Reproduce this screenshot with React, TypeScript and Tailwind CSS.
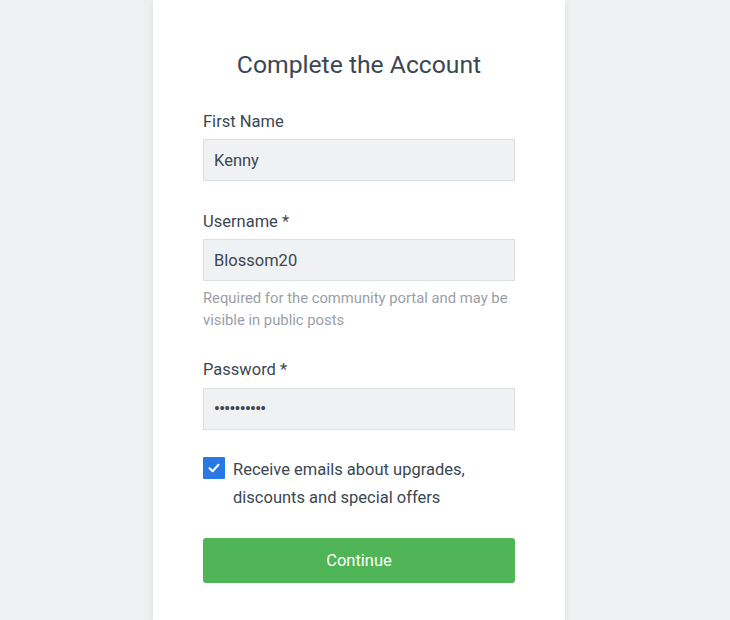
import React from "react";

export default function App() {
  return (
    <div className="min-h-[620px] w-full bg-[#eff0f1]" style={{ fontFamily: "Roboto, 'Liberation Sans', sans-serif" }}>
      <div className="w-[412px] ml-[153px] min-h-[620px] bg-white shadow-[0_0_6px_rgba(0,0,0,0.08)] px-[50px] pt-[48px] pb-[40px]">
        <h1 className="pt-[2px] text-center text-[24.7px] leading-[30px] text-[#3b4752]">Complete the Account</h1>

        <div className="mt-[29px]">
          <label className="block pt-[2px] text-[16.5px] leading-[22px] text-[#3b4752]">First Name</label>
          <div className="mt-[6px] h-[42px] pt-[2px] bg-[#f0f1f3] border border-[#dcdfe3] flex items-center px-[10px] text-[16.5px] text-[#3b4752]">Kenny</div>
        </div>

        <div className="mt-[28px]">
          <label className="block pt-[2px] text-[16.5px] leading-[22px] text-[#3b4752]">Username *</label>
          <div className="mt-[6px] h-[42px] pt-[2px] bg-[#f0f1f3] border border-[#dcdfe3] flex items-center px-[10px] text-[16.5px] text-[#3b4752]">Blossom20</div>
          <p className="mt-[6px] text-[14.8px] leading-[22px] text-[#9aa0a6]">Required for the community portal and may be visible in public posts</p>
        </div>

        <div className="mt-[26px]">
          <label className="block pt-[2px] text-[16.5px] leading-[22px] text-[#3b4752]">Password *</label>
          <div className="mt-[7px] h-[42px] bg-[#f0f1f3] border border-[#dcdfe3] flex items-center px-[10px] text-[16px] tracking-[-0.6px] font-bold text-[#3b4752]">••••••••••</div>
        </div>

        <div className="mt-[25px] flex items-start gap-[8px]">
          <div className="mt-[2px] w-[22px] h-[22px] shrink-0 bg-[#2a78e4] rounded-[1px] flex items-center justify-center">
            <svg width="14" height="14" viewBox="0 0 14 14" fill="none">
              <path d="M2.5 7.2 L5.6 10.2 L11.5 3.8" stroke="white" strokeWidth="2" strokeLinecap="round" strokeLinejoin="round" />
            </svg>
          </div>
          <p className="pt-[1px] text-[16.5px] leading-[28px] text-[#3b4752]">Receive emails about upgrades, discounts and special offers</p>
        </div>

        <button className="mt-[26px] w-full h-[45px] pt-[2px] bg-[#4fb556] rounded-[3px] text-white text-[16.5px]">Continue</button>
      </div>
    </div>
  );
}
